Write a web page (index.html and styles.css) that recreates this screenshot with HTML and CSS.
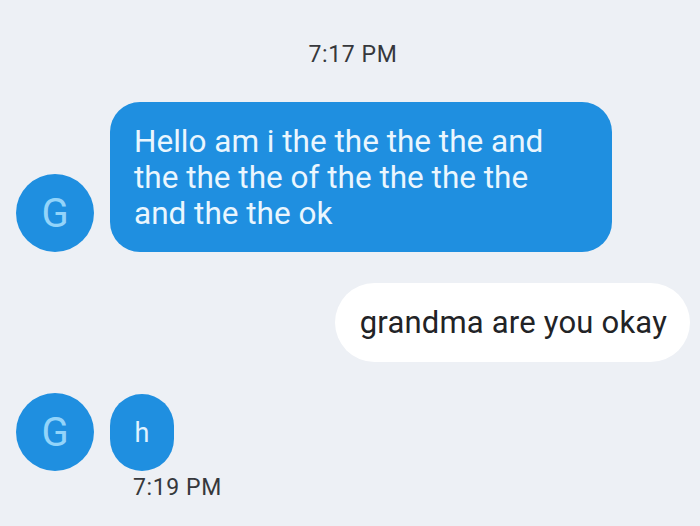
FILE: index.html
```html
<!DOCTYPE html>
<html>
<head>
<meta charset="utf-8">
<link rel="stylesheet" href="styles.css">
</head>
<body>
<div class="chat">
  <div class="time time-center">7:17 PM</div>
  <div class="row row-in">
    <div class="avatar">G</div>
    <div class="bubble bubble-blue">Hello am i the the the the and<br>the the the of the the the the<br>and the the ok</div>
  </div>
  <div class="row row-out">
    <div class="bubble bubble-white">grandma are you okay</div>
  </div>
  <div class="row row-in row-last">
    <div class="avatar">G</div>
    <div class="bubble bubble-small">h</div>
  </div>
  <div class="time time-left">7:19 PM</div>
</div>
</body>
</html>
```
FILE: styles.css
```css
html, body {
  margin: 0;
  padding: 0;
}
body {
  background: #edf0f5;
  font-family: Roboto, "Liberation Sans", sans-serif;
  width: 700px;
  height: 526px;
  overflow: hidden;
}
.chat {
  display: flex;
  flex-direction: column;
  padding-top: 42px;
}
.time {
  font-size: 23px;
  line-height: 26px;
  color: #36383c;
  letter-spacing: 0.6px;
}
.time-center {
  text-align: center;
  padding-left: 6px;
}
.time-left {
  padding-left: 133px;
  margin-top: 4px;
}
.row {
  display: flex;
  align-items: flex-end;
  gap: 16px;
}
.row-in {
  padding-left: 16px;
  margin-top: 34px;
}
.row-out {
  justify-content: flex-end;
  padding-right: 10px;
  margin-top: 31px;
}
.row-last {
  margin-top: 31px;
}
.avatar {
  width: 78px;
  height: 78px;
  border-radius: 50%;
  background: #1f8fe0;
  color: #93d4fa;
  font-size: 40px;
  display: flex;
  align-items: center;
  justify-content: center;
  flex-shrink: 0;
}
.bubble {
  box-sizing: border-box;
}
.bubble-blue {
  width: 502px;
  background: #1f8fe0;
  color: #eaf6fe;
  border-radius: 30px;
  font-size: 31.5px;
  line-height: 36px;
  padding: 22px 10px 20px 24px;
}
.bubble-white {
  background: #ffffff;
  color: #222326;
  border-radius: 40px;
  height: 79px;
  padding: 0 23px 0 25px;
  font-size: 31px;
  display: flex;
  align-items: center;
  letter-spacing: 0.2px;
}
.bubble-small {
  width: 64px;
  height: 77px;
  background: #1f8fe0;
  color: #dff2ff;
  border-radius: 32px;
  font-size: 27px;
  display: flex;
  align-items: center;
  justify-content: center;
}
```
